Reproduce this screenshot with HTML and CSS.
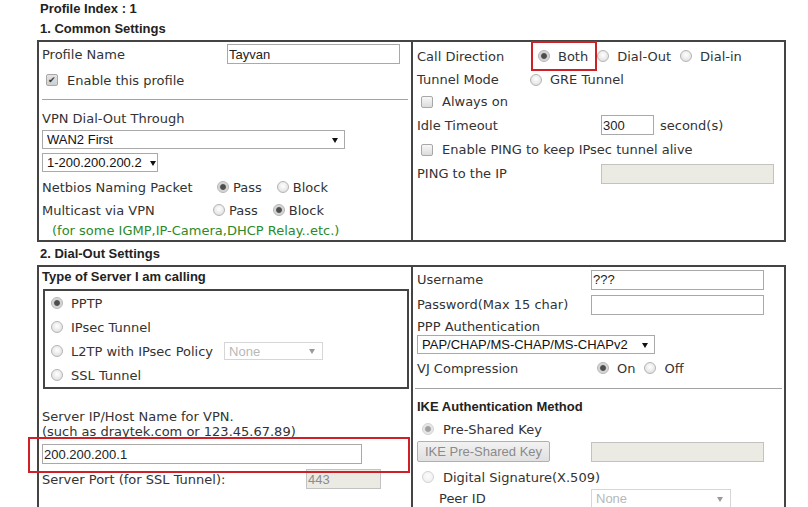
FILE: index.html
```html
<!DOCTYPE html>
<html lang="en">
<head>
    <meta charset="UTF-8">
    <title>VPN Profile</title>
    <link rel="stylesheet" href="styles.css">
</head>
<body>
<div class="page">
    <div class="title">Profile Index : 1</div>
    <div class="title mt3">1. Common Settings</div>

    <!-- 1. Common Settings -->
    <div class="box common">
        <div class="col col-l">
            <div class="row h24"><span class="lbl w185">Profile Name</span><input class="txt w173" type="text" value="Tayvan"></div>
            <div class="row h28"><label class="chk"><input class="ck" type="checkbox" checked>Enable this profile</label></div>
            <hr class="sep">
            <div class="row h20 mt8">VPN Dial-Out Through</div>
            <div class="sel mt2"><select class="s303"><option>WAN2 First</option></select></div>
            <div class="sel tight mt4"><select class="s116"><option>1-200.200.200.2</option></select></div>
            <div class="row h24 mt3">
                <span class="lbl w175">Netbios Naming Packet</span>
                <label class="opt"><input class="rd" type="radio" name="nb" checked>Pass</label>
                <label class="opt"><input class="rd" type="radio" name="nb">Block</label>
            </div>
            <div class="row h22">
                <span class="lbl w171">Multicast via VPN</span>
                <label class="opt"><input class="rd" type="radio" name="mc">Pass</label>
                <label class="opt"><input class="rd" type="radio" name="mc" checked>Block</label>
            </div>
            <div class="row h19 note">(for some IGMP,IP-Camera,DHCP Relay..etc.)</div>
        </div>
        <div class="col col-r">
            <div class="row h28">
                <span class="lbl w121">Call Direction</span>
                <label class="opt sp mark"><input class="rd" type="radio" name="cd" checked>Both</label>
                <label class="opt sp"><input class="rd" type="radio" name="cd">Dial-Out</label>
                <label class="opt sp"><input class="rd" type="radio" name="cd">Dial-in</label>
            </div>
            <div class="row h19">
                <span class="lbl w113">Tunnel Mode</span>
                <label class="opt sp"><input class="rd" type="radio" name="tm">GRE Tunnel</label>
            </div>
            <div class="row h25"><label class="chk"><input class="ck" type="checkbox">Always on</label></div>
            <div class="row h22">
                <span class="lbl w184">Idle Timeout</span>
                <input class="txt w53" type="text" value="300">
                <span class="unit">second(s)</span>
            </div>
            <div class="row h27"><label class="chk"><input class="ck" type="checkbox">Enable PING to keep IPsec tunnel alive</label></div>
            <div class="row h21">
                <span class="lbl w184">PING to the IP</span>
                <input class="txt w173" type="text" disabled>
            </div>
        </div>
    </div>

    <div class="title mt3">2. Dial-Out Settings</div>

    <!-- 2. Dial-Out Settings -->
    <div class="box dialout">
        <div class="col col-l">
            <div class="row h18 sub">Type of Server I am calling</div>
            <div class="inner">
                <div class="row h24"><label class="opt sp"><input class="rd" type="radio" name="srv" checked>PPTP</label></div>
                <div class="row h24"><label class="opt sp"><input class="rd" type="radio" name="srv">IPsec Tunnel</label></div>
                <div class="row h24">
                    <label class="opt sp"><input class="rd" type="radio" name="srv">L2TP with IPsec Policy</label>
                    <div class="sel off l2tp"><select class="s99" disabled><option>None</option></select></div>
                </div>
                <div class="row h24"><label class="opt sp"><input class="rd" type="radio" name="srv">SSL Tunnel</label></div>
            </div>
            <div class="hint">Server IP/Host Name for VPN.<br>(such as draytek.com or 123.45.67.89)</div>
            <div class="ipwrap mt5"><input class="txt w320" type="text" value="200.200.200.1"></div>
            <div class="row h20 mt5">
                <span class="lbl w264">Server Port (for SSL Tunnel):</span>
                <input class="txt w75" type="text" value="443" disabled>
            </div>
        </div>
        <div class="col col-r">
            <div class="row h21 mt2">
                <span class="lbl w174">Username</span>
                <input class="txt w173" type="text" value="???">
            </div>
            <div class="row h21 mt4">
                <span class="lbl w174">Password(Max 15 char)</span>
                <input class="txt w173" type="password">
            </div>
            <div class="row h17 mt3">PPP Authentication</div>
            <div class="sel"><select class="s238"><option>PAP/CHAP/MS-CHAP/MS-CHAPv2</option></select></div>
            <div class="row h24 mt2">
                <span class="lbl w180">VJ Compression</span>
                <label class="opt sp"><input class="rd" type="radio" name="vj" checked>On</label>
                <label class="opt sp"><input class="rd" type="radio" name="vj">Off</label>
            </div>
            <hr class="sep wide">
            <div class="row h17 mt9 sub">IKE Authentication Method</div>
            <div class="row h22 mt3"><label class="opt rad"><input class="rd" type="radio" name="ike" checked disabled>Pre-Shared Key</label></div>
            <div class="row h21 mt1">
                <button class="btn" disabled>IKE Pre-Shared Key</button>
                <input class="txt w173 key" type="text" disabled>
            </div>
            <div class="row h22 mt4"><label class="opt rad"><input class="rd" type="radio" name="ike" disabled>Digital Signature(X.509)</label></div>
            <div class="row h19 mt1">
                <span class="lbl w174 peer">Peer ID</span>
                <div class="sel off"><select class="s140" disabled><option>None</option></select></div>
            </div>
        </div>
    </div>
</div>
</body>
</html>
```

FILE: styles.css
```css
* {
    box-sizing: border-box;
}

body {
    margin: 0;
    background-color: #fff;
    color: #333;
    font: 13px "DejaVu Sans", Verdana, sans-serif;
}

.page {
    margin-left: 37px;
    width: 749px;
}

.title {
    height: 17px;
    padding-left: 3px;
    font: bold 13px/17px "Liberation Sans", Arial, sans-serif;
    color: #222;
}

/* bordered two-column boxes */
.box {
    display: flex;
    margin-top: 3px;
    border: 2px solid #444;
}

.box.common {
    height: 202px;
}

.box.dialout {
    padding-bottom: 20px;
}

.col-l {
    width: 374px;
    flex: none;
    padding: 0 3px;
    border-right: 2px solid #444;
}

.col-r {
    flex: 1;
    padding: 0 2px 0 4px;
}

.row {
    display: flex;
    align-items: center;
    white-space: nowrap;
}

.h17 { height: 17px; }
.h18 { height: 18px; }
.h19 { height: 19px; }
.h20 { height: 20px; }
.h21 { height: 21px; }
.h22 { height: 22px; }
.h24 { height: 24px; }
.h25 { height: 25px; }
.h27 { height: 27px; }
.h28 { height: 28px; }

.mt1 { margin-top: 1px; }
.mt2 { margin-top: 2px; }
.mt3 { margin-top: 3px; }
.mt4 { margin-top: 4px; }
.mt5 { margin-top: 5px; }
.mt8 { margin-top: 8px; }
.mt9 { margin-top: 9px; }

.lbl { flex: none; }
.w113 { width: 113px; }
.w121 { width: 121px; }
.w171 { width: 171px; }
.w174 { width: 174px; }
.w175 { width: 175px; }
.w180 { width: 180px; }
.w184 { width: 184px; }
.w185 { width: 185px; }
.w264 { width: 264px; }

.sep {
    margin: 5px 0 0 0;
    border: none;
    border-top: 1px solid #a3a3a3;
    height: 0;
}

.sep.wide {
    margin: 8px 0 0 -2px;
}

.sub {
    font: bold 13px "Liberation Sans", Arial, sans-serif;
    color: #222;
}

.note {
    padding-left: 10px;
    color: #2a8a2a;
}

.unit {
    margin-left: 6px;
}

/* text inputs */
.txt {
    height: 20px;
    margin: 0;
    padding: 0 1px;
    border: 1px solid #a9a9a9;
    border-radius: 0;
    background-color: #fff;
    color: #222;
    font: 13px "Liberation Sans", Arial, sans-serif;
}

.txt:disabled {
    background-color: #ebebe4;
    border-color: #c2c2c2;
    color: #8c8c8c;
}

.w53 { width: 53px; }
.w75 { width: 75px; }
.w173 { width: 173px; }
.w320 { width: 320px; }

/* selects with the small black arrow */
.sel {
    position: relative;
    display: flex;
    width: fit-content;
}

.sel select {
    appearance: none;
    -webkit-appearance: none;
    height: 19px;
    margin: 0;
    padding: 0 0 0 4px;
    border: 1px solid #a9a9a9;
    border-radius: 0;
    background-color: #fff;
    color: #111;
    font: 13px "Liberation Sans", Arial, sans-serif;
}

.sel::after {
    content: "";
    position: absolute;
    right: 7px;
    top: 50%;
    margin-top: -2px;
    border-left: 3px solid transparent;
    border-right: 3px solid transparent;
    border-top: 5px solid #111;
    pointer-events: none;
}

.sel.tight::after { right: 2px; }

.sel.off select {
    border-color: #c6c6c6;
    color: #9a9a9a;
}

.sel.off::after {
    border-top-color: #9a9a9a;
    right: 8px;
}

.sel.l2tp { margin-left: 11px; }
.sel.l2tp select { height: 18px; }

.s99 { width: 99px; }
.s116 { width: 116px; }
.s140 { width: 140px; }
.s238 { width: 238px; }
.s303 { width: 303px; }

/* radios and checkboxes */
.opt {
    display: inline-flex;
    align-items: center;
    gap: 4px;
}

.opt + .opt { margin-left: 15px; }
.opt.sp { gap: 8px; }
.opt.sp + .opt.sp { margin-left: 9px; }
.opt.rad { gap: 9px; margin-left: 5px; }

.chk {
    display: inline-flex;
    align-items: center;
    gap: 9px;
    margin-left: 4px;
}

.rd {
    appearance: none;
    -webkit-appearance: none;
    flex: none;
    width: 12px;
    height: 12px;
    margin: 0;
    border: 1px solid #b4b4b4;
    border-radius: 50%;
    background: radial-gradient(circle at 50% 40%, #fff 0, #e6e6e6 65%, #d6d6d6 100%);
}

.rd:checked {
    background: radial-gradient(circle, #4d4d4d 0 2.4px, #cfcfcf 3.4px, #ececec 100%);
}

.rd:disabled {
    border-color: #d2d2d2;
    background: radial-gradient(circle at 50% 40%, #fcfcfc, #ececec);
}

.rd:disabled:checked {
    background: radial-gradient(circle, #a0a0a0 0 2.4px, #e2e2e2 3.4px, #f2f2f2 100%);
}

.ck {
    appearance: none;
    -webkit-appearance: none;
    flex: none;
    display: inline-grid;
    place-content: center;
    width: 12px;
    height: 12px;
    margin: 0;
    border: 1px solid #a8a8a8;
    border-radius: 2px;
    background: linear-gradient(#f7f7f7, #dcdcdc);
}

.ck:checked {
    background: linear-gradient(#e4e4e4, #cfcfcf);
}

.ck:checked::before {
    content: "\2714";
    font-size: 9px;
    line-height: 1;
    color: #3a3a3a;
}

/* inner box of server types */
.inner {
    width: 366px;
    margin: 4px 0 0 1px;
    padding-left: 6px;
    border: 2px solid #444;
}

.hint {
    margin-top: 20px;
    line-height: 15px;
}

.btn {
    width: 133px;
    height: 21px;
    padding: 0;
    border: 1px solid #b0b0b0;
    border-radius: 2px;
    background: linear-gradient(#f2f2f2, #e0e0e0);
    color: #8a8a8a;
    font: 13px "Liberation Sans", Arial, sans-serif;
}

.key { margin-left: 41px; }

.peer { padding-left: 22px; }

/* red highlight marks */
.mark,
.ipwrap {
    position: relative;
}

.mark { align-self: stretch; }

.mark::after {
    content: "";
    position: absolute;
    left: -7px;
    top: -1px;
    bottom: -1px;
    width: 62px;
    border: 2px solid #cd2027;
    pointer-events: none;
}

.ipwrap {
    display: flex;
    width: fit-content;
}

.ipwrap::after {
    content: "";
    position: absolute;
    left: -14px;
    top: -7px;
    width: 378px;
    height: 32px;
    border: 2px solid #cd2027;
    pointer-events: none;
}
```
